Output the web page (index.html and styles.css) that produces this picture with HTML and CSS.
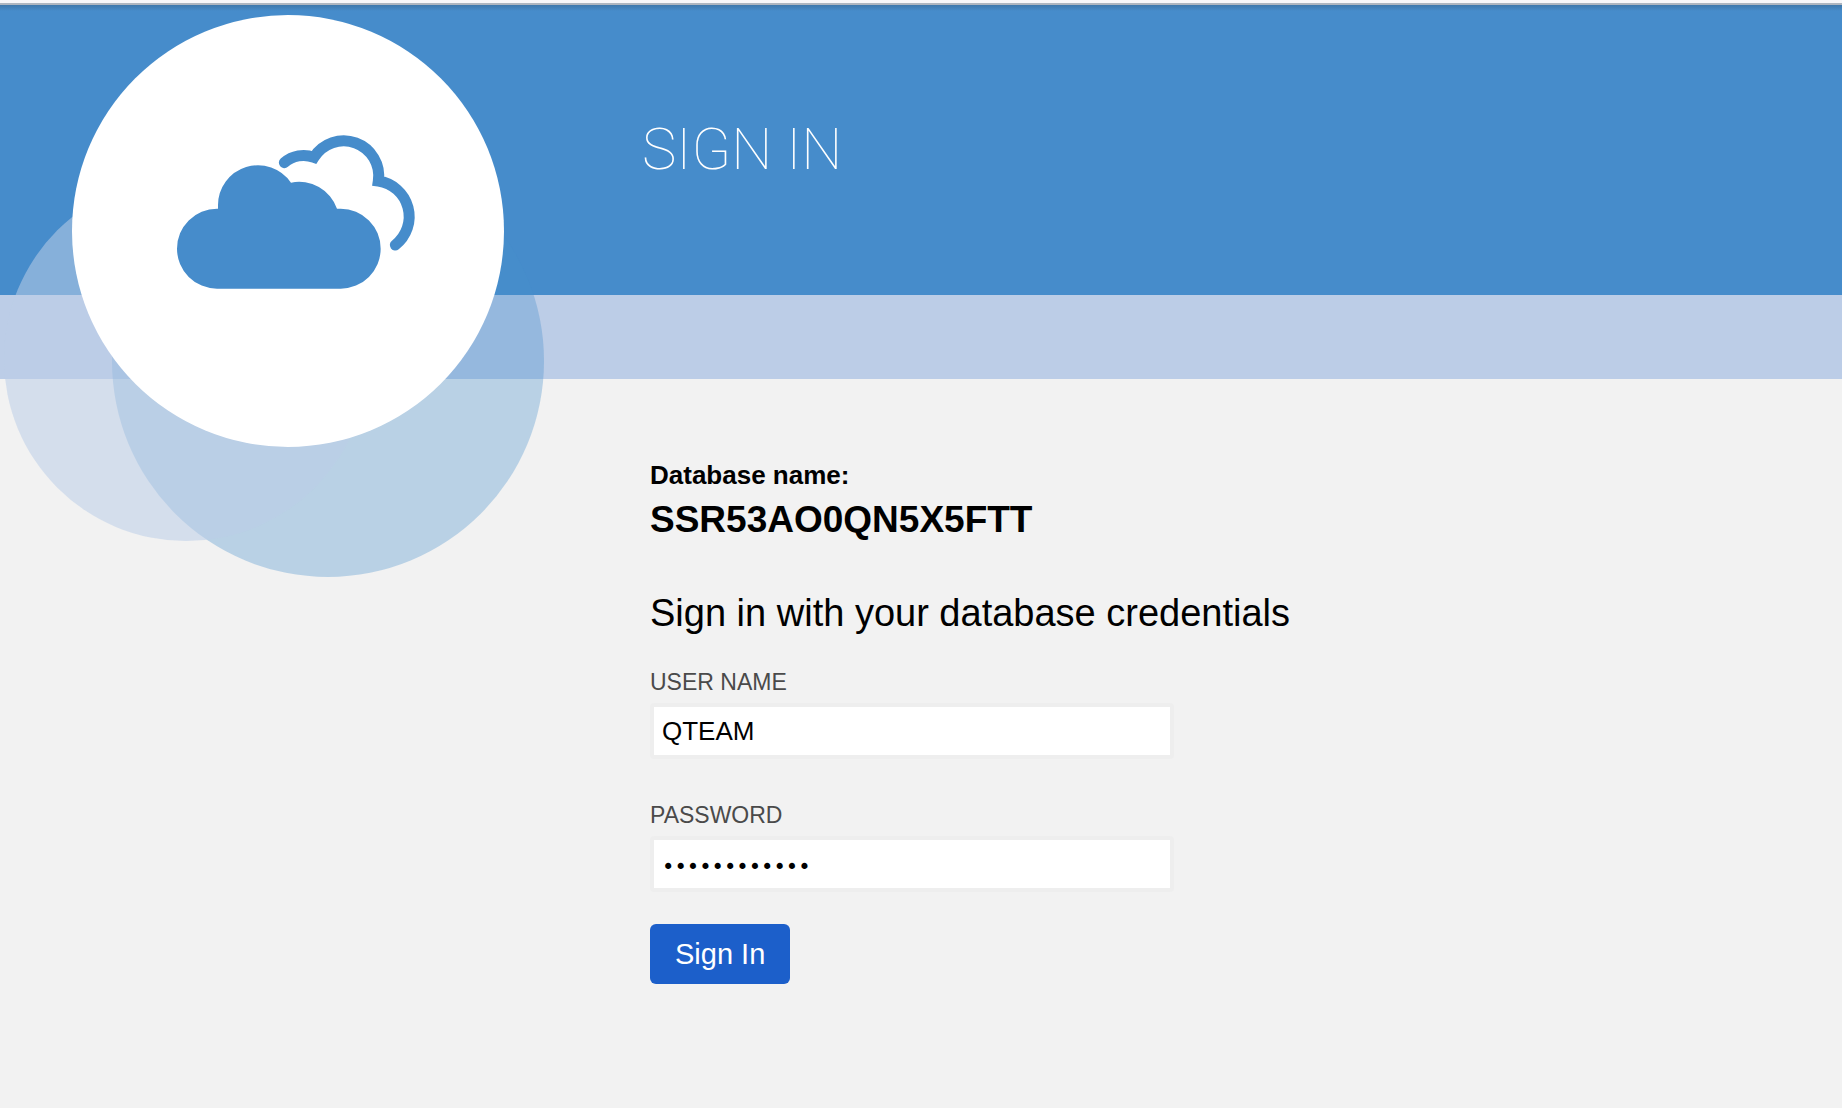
FILE: index.html
```html
<!DOCTYPE html>
<html lang="en">
<head>
  <meta charset="utf-8">
  <meta name="viewport" content="width=device-width, initial-scale=1">
  <title>Sign In</title>
  <link rel="stylesheet" href="styles.css">
</head>
<body>
  <header class="banner">
    <h1 class="banner-title">SIGN IN</h1>
    <div class="brand">
      <span class="bubble bubble-blue"></span>
      <span class="bubble bubble-pale"></span>
      <div class="brand-disc">
        <svg class="brand-icon" viewBox="51 45 714 462" role="img" aria-label="Cloud">
          <path fill="#468ccb" d="M171 506A120 120 0 0 1 171 266H174V256A120 120 0 0 1 393 188A120 120 0 0 1 531 266H542A120 120 0 0 1 542 506Z"/>
          <path fill="none" stroke="#468ccb" stroke-width="33" stroke-linecap="round" d="M373 128A88 88 0 0 1 462 112A105 105 0 0 1 655 183A108 108 0 0 1 706 375"/>
        </svg>
      </div>
    </div>
  </header>
  <div class="stripe"></div>
  <main class="content">
    <p class="db-label">Database name:</p>
    <p class="db-name">SSR53AO0QN5X5FTT</p>
    <h2 class="prompt">Sign in with your database credentials</h2>
    <form class="form">
      <div class="field">
        <label class="field-label" for="username">USER NAME</label>
        <input class="field-input" id="username" type="text" value="QTEAM">
      </div>
      <div class="field">
        <label class="field-label" for="password">PASSWORD</label>
        <input class="field-input field-input-password" id="password" type="password" value="abcdefghijkl">
      </div>
      <button class="submit" type="button">Sign In</button>
    </form>
  </main>
</body>
</html>
```
FILE: styles.css
```css
* {
  box-sizing: border-box;
}

body {
  margin: 0;
  min-height: 100vh;
  background: #f2f2f2;
  color: #000;
  font-family: "Liberation Sans", Arial, sans-serif;
}

h1, h2, p {
  margin: 0;
  font-weight: 400;
}

.banner {
  position: relative;
  padding: 112px 24px 112px 642px;
  border-top: 3px solid #f7f7f9;
  background: linear-gradient(#aeb6c0 2px, #3d77ab 2px, #468ccb 8px);
}

.banner-title {
  color: #fff;
  font-family: Roboto, "Liberation Sans", sans-serif;
  font-size: 58px;
  font-weight: 100;
  line-height: 68px;
}

.stripe {
  height: 84px;
  background: #bccde7;
}

/* Overlapping discs that hang over the banner, stripe and page */
.brand {
  position: absolute;
  top: 12px;
  left: 72px;
}

.bubble {
  position: absolute;
  border-radius: 50%;
}

.bubble-blue {
  top: 130px;
  left: 40px;
  width: 432px;
  height: 432px;
  background: rgba(70, 143, 203, 0.33);
}

.bubble-pale {
  top: 162px;
  left: -68px;
  width: 364px;
  height: 364px;
  background: rgba(188, 205, 231, 0.55);
}

.brand-disc {
  position: relative;
  width: 432px;
  height: 432px;
  padding: 120px 0 0 105px;
  border-radius: 50%;
  background: #fff;
}

.brand-icon {
  display: block;
  width: 238px;
  height: 154px;
  overflow: visible;
}

.content {
  padding: 80px 24px 48px 650px;
}

.db-label {
  font-size: 26px;
  font-weight: 700;
  line-height: 32px;
}

.db-name {
  margin-top: 5px;
  font-size: 37px;
  font-weight: 700;
  line-height: 48px;
}

.prompt {
  margin-top: 45px;
  font-size: 38px;
  line-height: 48px;
}

.form {
  display: flex;
  flex-direction: column;
  align-items: flex-start;
  gap: 40px;
  max-width: 524px;
  margin-top: 29px;
}

.field {
  display: flex;
  flex-direction: column;
  gap: 5px;
  width: 100%;
}

.field-label {
  color: #4a4a4a;
  font-size: 23px;
  line-height: 32px;
}

.field-input {
  width: 100%;
  height: 56px;
  padding: 0 8px;
  border: 4px solid #eee;
  border-radius: 4px;
  outline: 0;
  background: #fff;
  background-clip: padding-box;
  color: #000;
  font-family: inherit;
  font-size: 26px;
}

.field-input-password {
  padding-top: 6px;
  font-family: "DejaVu Sans", sans-serif;
  font-size: 21px;
}

.submit {
  height: 60px;
  margin-top: -8px;
  padding: 0 25px;
  border: 0;
  border-radius: 6px;
  background: #1c5fca;
  color: #fff;
  font-family: inherit;
  font-size: 29px;
}
```
